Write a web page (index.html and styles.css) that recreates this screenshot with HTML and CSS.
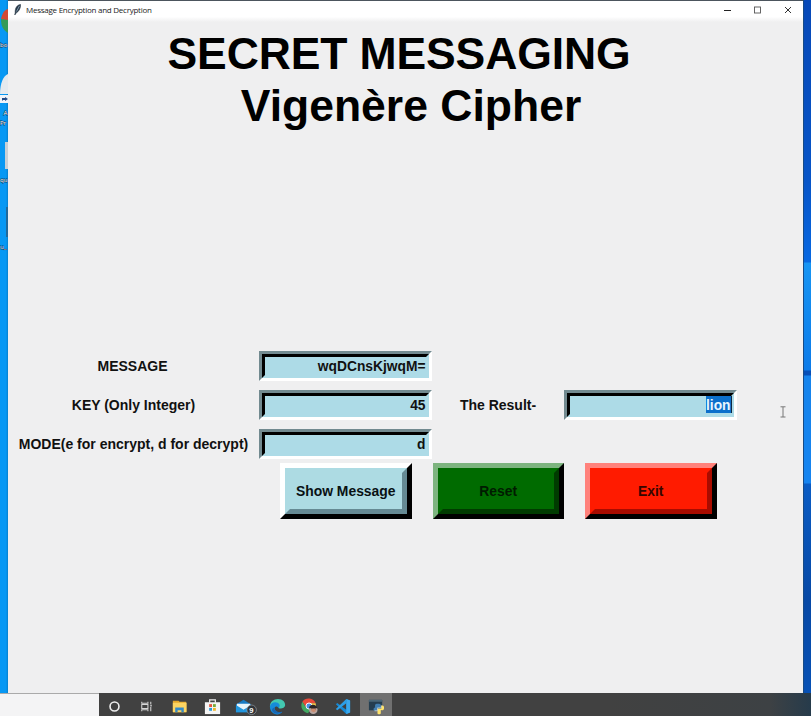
FILE: index.html
```html
<!DOCTYPE html>
<html lang="en">
<head>
<meta charset="utf-8">
<title>Message Encryption and Decryption</title>
<link rel="stylesheet" href="styles.css">
</head>
<body>
<div class="screen">
  <div class="desktop">
    <div class="strip-left">
      <svg width="8" height="260" viewBox="0 0 8 260">
        <path d="M8 9C4 10 2 14 1 19l7 2z" fill="#d34a35"/><path d="M1 19c0 7 2 11 7 14V20z" fill="#349b58"/>
        <path d="M8 74C3 76 0 84 0 94h8z" fill="#e4e9ee"/>
        <rect y="95" width="8" height="8" fill="#eef3fa"/><path d="M2 101V98h3v-1l3 2-3 2v-1H3z" fill="#234b86"/>
        <rect x="5" y="142" width="3" height="27" fill="#c9d0d6"/>
        <rect x="6" y="207" width="2" height="30" fill="#21699b"/>
        <g class="icon-label"><text x="0" y="47">bo</text><text x="3.500" y="115">A</text><text x="0" y="125">Pr</text><text x="0" y="182">qu</text><text x="0" y="249">u_</text></g>
      </svg>
    </div>
    <main class="window">
      <header class="titlebar">
        <svg class="feather" width="8" height="12" viewBox="0 0 8 12"><path d="M6.5.5C3 1 1 4 1.200 8.500L.8 11l1.300-2C5 7.500 6.800 4 6.500.5z" fill="#273747" stroke="#273747" stroke-width=".6"/><path d="M5.500 1.800L2.500 7.500" stroke="#8aa5b8" stroke-width=".9"/></svg>
        <span class="caption">Message Encryption and Decryption</span>
        <svg class="controls" width="76" height="12" viewBox="0 0 76 12" fill="none"><path d="M4 6.500h7" stroke="#222"/><rect x="34.500" y="3" width="6" height="6" stroke="#555" stroke-width=".9"/><path d="M65 3l6 6M71 3l-6 6" stroke="#333"/></svg>
      </header>
      <h1 class="heading"><span class="first">SECRET MESSAGING</span><span class="second">Vigenère Cipher</span></h1>
      <form class="fields">
        <label class="message-label" for="msg">MESSAGE</label><div class="entry" id="msg">wqDCnsKjwqM=</div><span></span><span></span>
        <label for="key">KEY (Only Integer)</label><div class="entry" id="key">45</div>
        <label for="result">The Result-</label><div class="entry" id="result"><span class="selected">lion</span></div>
        <label for="mode">MODE(e for encrypt, d for decrypt)</label><div class="entry" id="mode">d</div>
      </form>
      <div class="buttons">
        <button class="btn show"><span>Show Message</span></button>
        <button class="btn reset"><span>Reset</span></button>
        <button class="btn exit"><span>Exit</span></button>
      </div>
      <svg class="cursor" width="6" height="12" viewBox="0 0 6 12" fill="none" stroke="#777"><path d="M.5.8h5M.5 11h5M3 1v10"/></svg>
    </main>
    <div class="strip-right"></div>
  </div>
  <footer class="taskbar">
    <div class="search"></div>
    <div class="task"><svg viewBox="0 0 20 20"><circle cx="10" cy="10" r="4.700" fill="none" stroke="#eee" stroke-width="1.700"/></svg></div>
    <div class="task"><svg viewBox="0 0 20 20" fill="none" stroke="#d5d5d5" stroke-width="1.100"><path d="M5 5v1.500h6.500V5M5 15v-1.500h6.500V15M5 8h6.500v4H5zM14.500 5v2.500M14.500 10.500V15"/><path d="M14 9h1.500" stroke-width="1.800"/></svg></div>
    <div class="task"><svg viewBox="0 0 20 20"><path d="M3 4h6l1 1h7v11H3z" fill="#e6a82a"/><path d="M3 6h14.500v10H3z" fill="#fcd462"/><path d="M5.500 16v-5h9v5h-2.500v-2h-4v2z" fill="#348ac7"/></svg></div>
    <div class="task"><svg viewBox="0 0 20 20"><path d="M7 6V3h6v3" fill="none" stroke="#eee" stroke-width="1.300"/><path d="M2 5.500h16V18H2z" fill="#f4f4f4"/><path d="M6.500 7.500h3v3h-3z" fill="#e65338"/><path d="M10.500 7.500h3v3h-3z" fill="#76aa3a"/><path d="M6.500 11.500h3v3h-3z" fill="#2999d6"/><path d="M10.500 11.500h3v3h-3z" fill="#f0b52a"/></svg></div>
    <div class="task"><svg viewBox="0 0 20 20"><path d="M1 8l8-5 8 5v8H1z" fill="#187bc4"/><path d="M2 7h14v3l-7 4-7-4z" fill="#e7f4fb"/><path d="M1 8.500l8 5 8-5V16H1z" fill="#2196df"/><circle cx="17.500" cy="13.500" r="5" fill="#30353a" stroke="#9a9fa3" stroke-width=".7"/><text x="15.100" y="16.500" class="badge">9</text></svg></div>
    <div class="task"><svg viewBox="0 0 20 20"><path d="M2 10c0-5 4-8 8.500-8 5 0 8 3.500 7.500 7-.4 3-5 4-7 2.500 1-1 .5-4-2-4C5 7.500 3 9 2 10z" fill="#43c8b0"/><path d="M2 10c1-5 8-6 10-2 .7 1.500 0 3-1 3.500C9 9 7 10 7 12c0 3 4 5 8 3.500-4 5.500-13 2.500-13-5.500z" fill="#168bd9"/><path d="M7 11c-1 3 3 6 8 4.500-3 3-8 2.500-10 0-1.500-2-.5-4 2-4.500z" fill="#1766b4"/></svg></div>
    <div class="task"><svg viewBox="0 0 20 20"><path d="M2.500 5a8 8 0 0 1 14 1.500H10L6.500 11z" fill="#e94b3b"/><path d="M2.500 5a8 8 0 0 0 6 12l3-5H7z" fill="#42a862"/><path d="M10 6.500h6.500a8 8 0 0 1-5 10L13 11z" fill="#f2c84a"/><circle cx="9.500" cy="9.500" r="3.200" fill="#4b8fe2" stroke="#fff"/><circle cx="14" cy="13.500" r="4.500" fill="#b8a5a0"/><path d="M9.500 12c0-5 8-5 9 0l-2-.5v2h-5v-2z" fill="#292427"/><path d="M11.500 12h5v3l-2 1-2.500-1z" fill="#ca8c71"/></svg></div>
    <div class="task"><svg viewBox="0 0 20 20"><path d="M14 2l4 1.800v12.400L14 18 3 7.700 4.500 6.300 14 13.500z" fill="#168ad6"/><path d="M14 2v4.500L4.500 14 3 12.600z" fill="#2b9fe8"/><path d="M14 2l4 1.800v12.400L14 18z" fill="#3aa8ed"/></svg></div>
    <div class="task active"><svg viewBox="0 0 20 20"><path d="M2 3h14v11H2z" fill="#253e50"/><path d="M2 3h14v2H2z" fill="#4b6777"/><path d="M8.500 11V8.500c0-2 6-2 6 0v3h-4v3H8c-1.500 0-1.500-3.500.5-3.500z" fill="#427eb0"/><path d="M11 17v-5h4V9h1.500c2 0 2 5 0 5h-2v3c0 1.500-3.500 1.500-3.500 0z" fill="#ffe36c"/><path d="M8 14.500h3v-3h4V9" fill="none" stroke="#dce6e8" stroke-width=".7"/></svg></div>
  </footer>
</div>
</body>
</html>
```
FILE: styles.css
```css
* { box-sizing: border-box; }
body { margin: 0; overflow: hidden; font-family: "Liberation Sans", Arial, sans-serif; }
.screen { width: 811px; height: 716px; display: flex; flex-direction: column; }
.desktop { height: 693px; display: flex; }
.strip-left { width: 8px; background: linear-gradient(90deg, #0798f4 75%, #0780cd); overflow: hidden; }
.strip-left svg { display: block; }
.icon-label { font: 6px "Open Sans", sans-serif; fill: #fff; stroke: #12314a; stroke-width: .8px; paint-order: stroke; }
.strip-right {
  width: 8px;
  border-left: 1px solid #174b86;
  background: linear-gradient(#0749b8 0, #0755c8 180px, #0768e2 262px, #1795f4 263px, #0c7be9 370px, #064fb8 371px, #064fb8 375px, #1684ed 376px, #1684f0 483px, #0a5cc4 484px, #0749a6 600px, #0751b5);
}
.window { position: relative; width: 795px; background: #efeff0; border-top: 1px solid #4c555d; }
.titlebar { height: 21px; padding: 0 7px 3px 6px; display: flex; align-items: center; background: linear-gradient(#fff 75%, #efeff0); }
.feather { margin-right: 4px; }
.caption { font: 8px/12px "Open Sans", sans-serif; letter-spacing: -.25px; color: #222; white-space: nowrap; }
.controls { margin-left: auto; }
.heading { margin: 6px 0 0; display: flex; flex-direction: column; align-items: center; font-size: 44.500px; line-height: 52px; font-weight: bold; color: #000; white-space: nowrap; padding-right: 13px; }
.first { letter-spacing: -.12px; }
.second { padding-left: 24px; }
.fields { margin-top: 219px; display: grid; grid-template-columns: 251px 173px 132px 173px; grid-auto-rows: 30px; row-gap: 9px; font-size: 14px; font-weight: bold; color: #111; white-space: nowrap; }
.fields label { line-height: 30px; text-align: center; }
.fields .message-label { padding-right: 2px; }
.entry {
  position: relative;
  border: 3px solid;
  border-color: #728a90 #fff #fff #728a90;
  background: #addbe7;
  display: flex;
  justify-content: flex-end;
  padding: 3px 3.500px 0 0;
  font-size: 13.800px;
  line-height: 19px;
  background-clip: padding-box;
}
.entry::before { content: ""; position: absolute; inset: 0; border: 3px solid; border-color: #000 transparent transparent #000; }
.selected { position: relative; height: 17px; background: #0b6fcb; color: #e8f6ff; border-right: 1px solid #102b42; margin-right: -1px; }
.buttons { display: flex; gap: 21px; margin: 4px 0 0 272px; }
.btn { width: 131.500px; height: 56px; padding: 0; border: 5px solid; font: bold 13.900px "Liberation Sans", Arial, sans-serif; color: #091114; }
.btn span { display: flex; width: 100%; height: 100%; align-items: center; justify-content: center; border: 5px solid; white-space: nowrap; }
.show { border-color: #fff #000 #000 #fff; background: #addbe3; }
.show span { border-color: #addbe3 #668a94 #668a94 #addbe3; }
.reset { border-color: #7db47f #000 #000 #7db47f; background: #006b00; }
.reset span { border-color: #006b00 #003b00 #003b00 #006b00; color: #001b00; }
.exit { border-color: #ff817b #000 #000 #ff817b; background: #ff1b00; }
.exit span { border-color: #ff1b00 #a90c00 #a90c00 #ff1b00; color: #350600; }
.cursor { position: absolute; left: 772px; top: 405px; }
.taskbar { height: 23px; display: flex; background: linear-gradient(90deg, #414141 75%, #3d4144 95%, #263b4b); overflow: hidden; }
.search { width: 99px; background: #f4f4f5; border-top: 1px solid #aaa; }
.task { width: 32.600px; height: 27px; padding-right: 2px; display: flex; justify-content: center; align-items: center; }
.task svg { width: 19px; height: 19px; overflow: visible; }
.active { padding-right: 0; background: #707070; }
.badge { font: bold 8px "Liberation Sans", sans-serif; fill: #fff; }
```
